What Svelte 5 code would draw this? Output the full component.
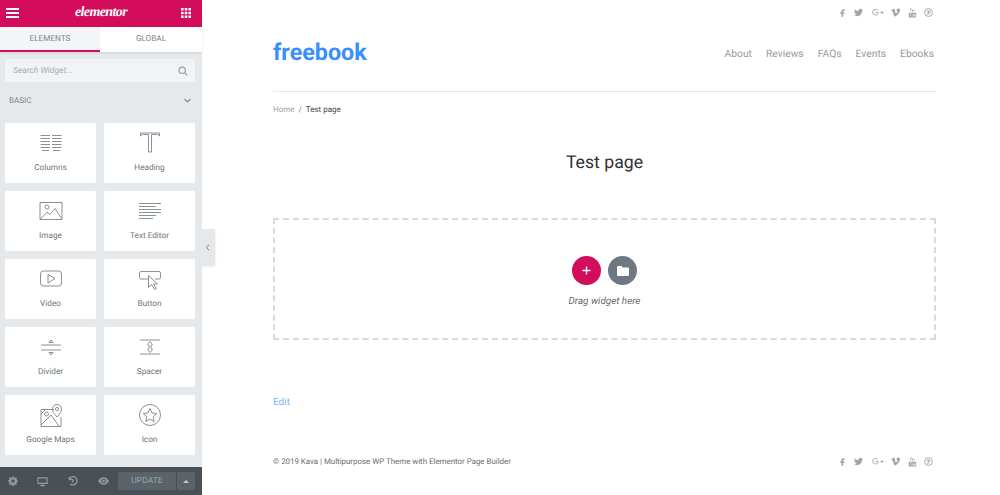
<script>
    const widgets = [
        { name: "Columns", icon: "columns" },
        { name: "Heading", icon: "heading" },
        { name: "Image", icon: "image" },
        { name: "Text Editor", icon: "text" },
        { name: "Video", icon: "video" },
        { name: "Button", icon: "button" },
        { name: "Divider", icon: "divider" },
        { name: "Spacer", icon: "spacer" },
        { name: "Google Maps", icon: "maps" },
        { name: "Icon", icon: "star" },
    ];
    const navItems = ["About", "Reviews", "FAQs", "Events", "Ebooks"];
</script>

{#snippet social()}
    <div class="social">
        <svg viewBox="0 0 24 24" width="9" height="9"><path d="M14.5 8h3V3.500h-3.500c-3 0-5 2-5 5V11H6v4h3v8.500h4.500V15H17l.6-4h-4.100V9c0-.6.400-1 1-1z" /></svg>
        <svg viewBox="0 0 24 24" width="9" height="9"><path d="M23.950 4.570a10 10 0 01-2.820.770 4.960 4.960 0 002.160-2.720c-.950.560-2 .960-3.130 1.180a4.920 4.920 0 00-8.380 4.480C7.690 8.100 4.070 6.130 1.640 3.160a4.820 4.820 0 00-.670 2.480c0 1.710.870 3.210 2.190 4.100a4.900 4.900 0 01-2.230-.620v.060a4.920 4.920 0 003.950 4.830 5 5 0 01-2.210.080 4.940 4.940 0 004.600 3.420 9.870 9.870 0 01-6.100 2.100c-.390 0-.780-.020-1.170-.060a14 14 0 007.560 2.210c9.050 0 14-7.500 14-13.990 0-.210 0-.420-.020-.630A9.940 9.940 0 0024 4.590z" /></svg>
        <svg viewBox="0 0 34 24" width="13" height="9"><path class="line" d="M18 6.500A8 8 0 0 0 4 12a8 8 0 0 0 15 2.500V12h-7M25 12h8M29 8v8" /></svg>
        <svg viewBox="0 0 24 24" width="9" height="9"><path d="M23.980 6.420c-.110 2.340-1.740 5.540-4.900 9.610-3.260 4.240-6.020 6.370-8.290 6.370-1.400 0-2.570-1.300-3.550-3.880L5.320 11.400C4.600 8.820 3.830 7.520 3.010 7.520c-.180 0-.810.380-1.880 1.130L0 7.200c1.180-1.050 2.350-2.090 3.500-3.130C5.080 2.700 6.270 1.980 7.050 1.910c1.870-.180 3.020 1.100 3.450 3.840.470 2.950.790 4.790.970 5.500.540 2.450 1.130 3.680 1.780 3.680.500 0 1.260-.800 2.260-2.390 1-1.590 1.540-2.800 1.620-3.630.140-1.370-.400-2.060-1.620-2.060-.570 0-1.160.120-1.770.390 1.180-3.870 3.430-5.760 6.760-5.640 2.470.060 3.630 1.660 3.490 4.800z" /></svg>
        <svg viewBox="0 0 24 24" width="9" height="10"><path d="M6 0l1.500 4L9 0h1.500L8.200 6v3H7V6L4.600 0zM11 2.500h2.500V8H11zM15 2.500h1.200V7h1.300V2.500h1.200V8H15zM2 11h20v13H2z" /><path class="cut" d="M5 14h4M7 14v7M11 16v5M14 16v5h2v-5M18 14v7h2v-3h-2" /></svg>
        <svg viewBox="0 0 24 24" width="9" height="9"><path class="line" d="M12 1.500a10.500 10.500 0 1 0 0 21 10.500 10.500 0 0 0 0-21z" /><path class="line" d="M10 19l2.500-11M8 12c-.8-3 1.500-5 4-5s4.500 1.800 4 4.500-3.500 4-5 2.500" /></svg>
    </div>
{/snippet}

<div class="page">
    <aside class="panel">
        <header class="panel-head">
            <svg viewBox="0 0 13 10" width="13" height="10" class="head-icon"><path d="M0 0h13v2H0zM0 4h13v2H0zM0 8h13v2H0z" /></svg>
            <span class="logo">elementor</span>
            <svg viewBox="0 0 10 10" width="10" height="10" class="head-icon"><path d="M0 0h2.600v2.600H0zM3.700 0h2.600v2.600H3.700zM7.400 0H10v2.600H7.400zM0 3.700h2.600v2.600H0zM3.700 3.700h2.600v2.600H3.700zM7.400 3.700H10v2.600H7.400zM0 7.400h2.600V10H0zM3.700 7.400h2.600V10H3.700zM7.400 7.400H10V10H7.400z" /></svg>
        </header>

        <div class="tabs">
            <div class="tab active">ELEMENTS</div>
            <div class="tab">GLOBAL</div>
        </div>

        <div class="search">
            <span>Search Widget...</span>
            <svg viewBox="0 0 12 12" width="10" height="10"><circle cx="5" cy="5" r="3.800" /><path d="M8 8l3.200 3.200" /></svg>
        </div>

        <div class="section">
            <span>BASIC</span>
            <svg viewBox="0 0 8 5" width="7" height="5"><path d="M.6.800L4 4l3.400-3.200" /></svg>
        </div>

        <div class="widgets">
            {#each widgets as w}
                <div class="widget">
                    <svg class="widget-icon" viewBox="0 0 24 24" width="24" height="24">
                        {#if w.icon === "columns"}
                            <path d="M1.500 4.500h9.500M13 4.500h9.500M1.500 7.500h9.500M13 7.500h9.500M1.500 10.500h9.500M13 10.500h9.500M1.500 13.500h9.500M13 13.500h9.500M1.500 16.500h9.500M13 16.500h9.500M3 19.500h7M14 19.500h7" />
                        {:else if w.icon === "heading"}
                            <path d="M2.500 5v-3h19v3l-2-1.500h-6v17.500h-3V3.500h-6z" />
                        {:else if w.icon === "image"}
                            <path d="M1 3.500h22v17H1z" /><circle cx="8" cy="8" r="2" /><path d="M1.500 20l6.500-7 3 2.500 5-6 6.500 10" />
                        {:else if w.icon === "text"}
                            <path d="M1 4.500h22M1 7.500h17M1 10.500h22M1 13.500h22M1 16.500h17M1 19.500h14" />
                        {:else if w.icon === "video"}
                            <rect x="1.500" y="4" width="21" height="15" rx="3" /><path d="M9 7.500l7 4-7 4.500z" />
                        {:else if w.icon === "button"}
                            <path d="M10 12H3a1.500 1.500 0 0 1-1.500-1.500V6A1.500 1.500 0 0 1 3 4.500h18A1.500 1.500 0 0 1 22.500 6v4.500A1.500 1.500 0 0 1 21 12h-4" /><path d="M10.500 8.500v12l3-3 3 5 1.800-1-2.800-4.500h4z" />
                        {:else if w.icon === "divider"}
                            <path d="M2 10h20M2 15h20M10 7.500L12 5l2 2.500zM10 17.500L12 20l2-2.500z" />
                        {:else if w.icon === "spacer"}
                            <path d="M2 5h20M2 19h20M12 6.500l2.500 3-1.500.8v3.400l1.500.8-2.500 3-2.500-3 1.500-.8v-3.400l-1.500-.8z" />
                        {:else if w.icon === "maps"}
                            <path d="M15 6.500H2v17h20V14" /><path d="M2 22l10-10 8 11M2 11l4-4" /><circle cx="7.500" cy="11" r="2" /><path d="M18 14c-3-3.500-4.500-5.500-4.500-8a4.500 4.500 0 0 1 9 0c0 2.500-1.500 4.500-4.500 8z" /><circle cx="18" cy="6" r="1.600" />
                        {:else}
                            <circle cx="12" cy="12" r="10.500" /><path d="M12 5.500l2 4.500 4.800.500-3.600 3.200 1 4.800-4.200-2.500-4.200 2.500 1-4.800-3.600-3.200 4.800-.500z" />
                        {/if}
                    </svg>
                    <span>{w.name}</span>
                </div>
            {/each}
        </div>

        <footer class="panel-foot">
            <svg viewBox="0 0 24 24" width="10" height="10"><path d="M10 1h4l.5 3 2 .8 2.500-1.800 2.800 2.800-1.800 2.500.8 2 3 .5v3.400l-3 .5-.8 2 1.800 2.500-2.800 2.800-2.500-1.800-2 .8-.5 3h-4l-.5-3-2-.8L5 21.800 2.200 19 4 16.500l-.8-2-3-.5v-4l3-.5.8-2L2.200 5 5 3l2.500 1.800 2-.8zM12 8a4 4 0 1 0 0 8 4 4 0 0 0 0-8z" fill-rule="evenodd" /></svg>
            <svg class="stroked thin" viewBox="0 0 24 24" width="11" height="11"><path d="M2 4h20v12H2zM12 16v5M7 21h10" /></svg>
            <svg class="stroked" viewBox="0 0 24 24" width="10" height="10"><path d="M4 5a10 10 0 1 1 1 14M2 3l2 6 6-2M12 7v6l-3 2" /></svg>
            <svg viewBox="0 0 24 16" width="11" height="8"><path fill-rule="evenodd" d="M0 8C3 3 7 0 12 0s9 3 12 8c-3 5-7 8-12 8S3 13 0 8zm12-5a5 5 0 1 0 0 10 5 5 0 0 0 0-10zm0 2a3 3 0 1 1 0 6 3 3 0 0 1 0-6z" /></svg>
            <div class="update">
                <span class="update-main">UPDATE</span>
                <span class="update-arrow"><svg viewBox="0 0 8 4" width="6" height="3"><path d="M0 4l4-4 4 4z" /></svg></span>
            </div>
        </footer>

        <div class="collapse">
            <svg viewBox="0 0 6 8" width="5" height="7"><path d="M4.800.800L1.500 4l3.300 3.200" /></svg>
        </div>
    </aside>

    <main class="site">
        <div class="top">{@render social()}</div>

        <div class="masthead">
            <div class="brand">freebook</div>
            <nav>
                {#each navItems as item}
                    <span>{item}</span>
                {/each}
            </nav>
        </div>

        <div class="crumbs">
            <span class="home">Home</span><span class="sep">/</span><span>Test page</span>
        </div>

        <h1>Test page</h1>

        <div class="dropzone">
            <div class="buttons">
                <span class="round add">
                    <svg viewBox="0 0 10 10" width="9" height="9"><path d="M5 .500v9M.500 5h9" /></svg>
                </span>
                <span class="round folder">
                    <svg viewBox="0 0 12 10" width="12" height="10"><path d="M0 1a1 1 0 0 1 1-1h3.500l1.200 1.500H11a1 1 0 0 1 1 1V9a1 1 0 0 1-1 1H1a1 1 0 0 1-1-1z" /></svg>
                </span>
            </div>
            <div class="drag">Drag widget here</div>
        </div>

        <div class="edit">Edit</div>

        <div class="foot">
            <span>© 2019 Kava | Multipurpose WP Theme with Elementor Page Builder</span>
            {@render social()}
        </div>
    </main>
</div>

<style>
    :global(body) {
        margin: 0;
        background: #fff;
        font-family: Roboto, "Liberation Sans", sans-serif;
        text-rendering: geometricPrecision;
    }

    .page {
        display: flex;
        width: 1000px;
        height: 495px;
        overflow: hidden;
    }

    /* editor panel */
    .panel {
        position: relative;
        flex: none;
        display: flex;
        flex-direction: column;
        width: 202px;
        height: 495px;
        background: #e6e9ec;
    }

    .panel-head {
        display: flex;
        align-items: center;
        justify-content: space-between;
        flex: none;
        height: 27px;
        padding: 0 11px 2px 6px;
        box-sizing: border-box;
        background: #d30c5c;
    }

    .head-icon path {
        fill: #fff;
    }

    .logo {
        margin-left: 2px;
        color: #fff;
        font-family: "Liberation Serif", serif;
        font-size: 14px;
        font-style: italic;
        font-weight: 700;
        letter-spacing: -.6px;
    }

    .tabs {
        display: flex;
        flex: none;
        height: 25px;
        box-shadow: 0 1px 2px #0000001a;
    }

    .tab {
        display: flex;
        align-items: center;
        justify-content: center;
        width: 100px;
        flex: 1;
        padding-bottom: 2px;
        box-sizing: border-box;
        background: #fff;
        color: #7b858e;
        font-size: 8.200px;
    }

    .tab.active {
        flex: none;
        background: #f4f5f6;
        border-bottom: 2px solid #d30c5c;
        padding-bottom: 0;
    }

    .search {
        display: flex;
        align-items: center;
        justify-content: space-between;
        flex: none;
        height: 23px;
        margin: 7px 7px 0 5px;
        padding: 0 7px 0 8px;
        border-radius: 3px;
        background: #f1f3f5;
        color: #a4afb7;
        font-size: 8.500px;
        font-style: italic;
    }

    .search svg {
        fill: none;
        stroke: #98a1a8;
        stroke-width: 1.500;
    }

    .section {
        display: flex;
        align-items: center;
        justify-content: space-between;
        flex: none;
        height: 12px;
        margin-top: 12px;
        padding: 0 11px 0 9px;
        color: #7b858e;
        font-size: 8px;
    }

    .section svg {
        fill: none;
        stroke: #6d7882;
        stroke-width: 1.200;
    }

    .widgets {
        display: grid;
        grid-template-columns: 91px 91px;
        grid-auto-rows: 60.500px;
        gap: 7.500px 8px;
        margin: 16.500px 0 0 5px;
    }

    .widget {
        display: flex;
        flex-direction: column;
        align-items: center;
        border-radius: 2px;
        background: #fff;
        color: #6a747c;
        font-size: 8.200px;
    }

    .widget span {
        margin-top: 7.500px;
    }

    .widget-icon {
        margin-top: 8.500px;
        fill: none;
        stroke: #7a838c;
        stroke-width: .9;
    }

    .panel-foot {
        display: flex;
        align-items: center;
        flex: none;
        height: 28px;
        margin-top: auto;
        padding-left: 8px;
        box-sizing: border-box;
        background: #495157;
    }

    .panel-foot > svg {
        flex: none;
        fill: #8f9aa2;
    }

    .panel-foot > svg:nth-child(2) {
        margin-left: 19px;
    }

    .panel-foot > svg:nth-child(3) {
        margin-left: 20px;
    }

    .panel-foot > svg:nth-child(4) {
        margin-left: 20px;
    }

    .panel-foot > .stroked {
        fill: none;
        stroke: #8f9aa2;
        stroke-width: 3;
    }

    .panel-foot > .thin {
        stroke-width: 2.400;
    }

    .update {
        display: flex;
        gap: 1px;
        margin-left: 9px;
    }

    .update-main {
        display: flex;
        align-items: center;
        justify-content: center;
        width: 58px;
        height: 18px;
        border-radius: 2px 0 0 2px;
        background: #5a6369;
        color: #98a3ab;
        font-size: 8.500px;
    }

    .update-arrow {
        display: flex;
        align-items: center;
        justify-content: center;
        width: 18px;
        height: 18px;
        border-radius: 0 2px 2px 0;
        background: #5a6369;
    }

    .update-arrow path {
        fill: #c2cbd2;
    }

    .collapse {
        position: absolute;
        top: 229px;
        left: 202px;
        display: flex;
        align-items: center;
        justify-content: center;
        width: 13px;
        height: 37px;
        border-radius: 0 2px 2px 0;
        background: #e6e9ec;
        box-shadow: 1px 1px 2px #0000000f;
    }

    .collapse svg {
        fill: none;
        stroke: #6d7882;
        stroke-width: 1.200;
        margin-right: 2px;
    }

    /* the page itself */
    .site {
        display: flex;
        flex-direction: column;
        width: 663px;
        margin-left: 71px;
    }

    .social {
        display: flex;
        align-items: center;
        gap: 7.500px;
    }

    .social svg {
        fill: #a3a3a3;
    }

    .social .line {
        fill: none;
        stroke: #a3a3a3;
        stroke-width: 2.400;
    }

    .social .cut {
        fill: none;
        stroke: #fff;
        stroke-width: 1.200;
    }

    .top {
        display: flex;
        justify-content: flex-end;
        height: 24px;
        padding: 1px 3px 0 0;
        box-sizing: border-box;
    }

    .masthead {
        display: flex;
        align-items: center;
        justify-content: space-between;
        height: 68px;
        padding-bottom: 12px;
        box-sizing: border-box;
        border-bottom: 1px solid #e8e8e8;
    }

    .brand {
        color: #398ffc;
        font-size: 23.300px;
        font-weight: 700;
    }

    nav {
        display: flex;
        gap: 14px;
        margin: 3px 2px 0 0;
        color: #9a9a9a;
        font-size: 10.300px;
    }

    .crumbs {
        margin-top: 12px;
        color: #444;
        font-size: 8px;
        line-height: 11px;
    }

    .home {
        color: #a3a3a3;
    }

    .sep {
        margin: 0 4px;
        color: #777;
    }

    h1 {
        margin: 36px 0 0 0;
        color: #333;
        font-size: 17.700px;
        font-weight: 400;
        line-height: 24px;
        text-align: center;
    }

    .dropzone {
        display: flex;
        flex-direction: column;
        align-items: center;
        height: 122px;
        margin-top: 43px;
        padding-top: 36px;
        box-sizing: border-box;
        border: 2px dashed #dadada;
    }

    .buttons {
        display: flex;
        gap: 7px;
    }

    .round {
        display: flex;
        align-items: center;
        justify-content: center;
        width: 29px;
        height: 29px;
        border-radius: 50%;
    }

    .add {
        background: #d30c5c;
    }

    .add path {
        fill: none;
        stroke: #fff;
        stroke-width: 1.500;
    }

    .folder {
        background: #6d7882;
    }

    .folder path {
        fill: #fff;
    }

    .drag {
        margin-top: 11px;
        color: #666b70;
        font-size: 9.900px;
        font-style: italic;
    }

    .edit {
        margin-top: 57px;
        color: #7fb3f6;
        font-size: 10px;
        line-height: 12px;
    }

    .foot {
        display: flex;
        align-items: center;
        justify-content: space-between;
        margin-top: 47.500px;
        padding-right: 3px;
        color: #6b6b6b;
        font-size: 7.900px;
    }
</style>
